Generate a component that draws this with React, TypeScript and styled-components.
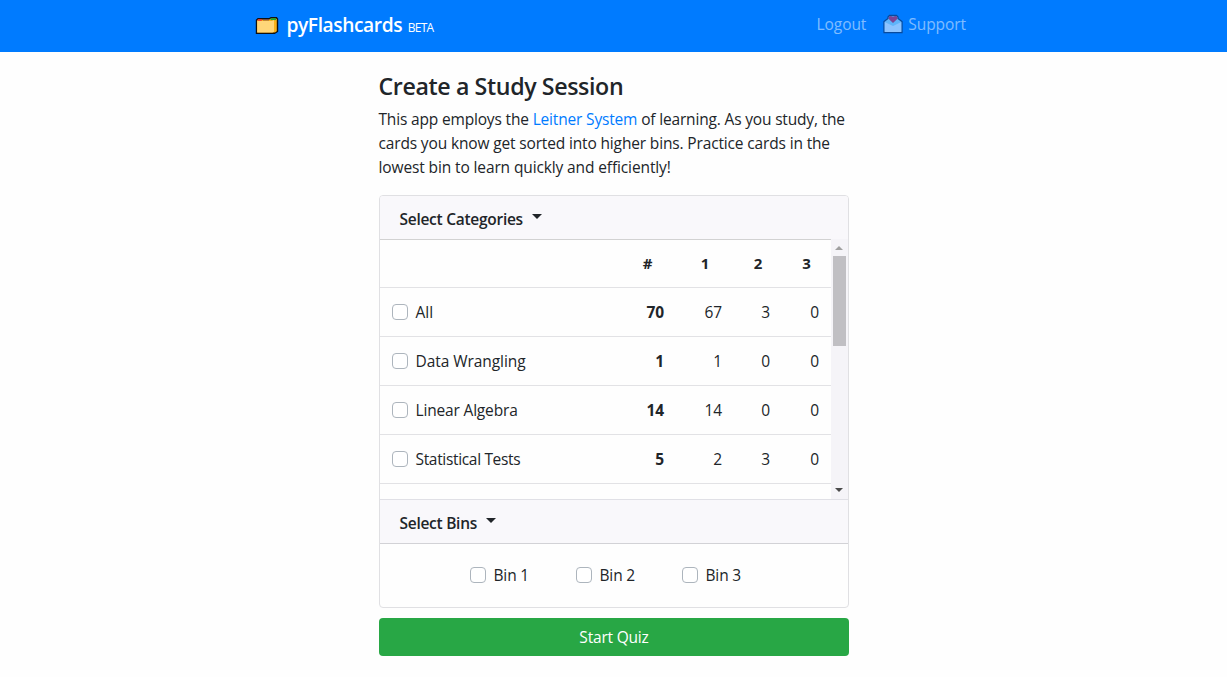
import React from 'react';
import styled, { createGlobalStyle } from 'styled-components';

const GlobalStyle = createGlobalStyle`
  * { box-sizing: border-box; }
  body {
    margin: 0;
    background: #fefefe;
    color: #212529;
    font: 400 15.5px/24px "Open Sans", "Noto Sans", sans-serif;
  }
`;

const Navbar = styled.nav`
  height: 52px;
  padding: 0 261px 0 255px;
  display: flex;
  align-items: center;
  justify-content: space-between;
  background: #007bff;
`;

const Brand = styled.a`
  display: flex;
  align-items: baseline;
  color: #fff;
  white-space: nowrap;
`;

const BrandName = styled.span`
  margin: -1px 0 1px 7.5px;
  font-size: 19.2px;
  font-weight: 600;
  letter-spacing: -0.42px;
  line-height: 30px;
`;

const Beta = styled.span`
  margin-left: 5.5px;
  font-size: 12px;
  letter-spacing: -0.7px;
`;

const NavLinks = styled.div`
  display: flex;
  align-items: center;
  padding-bottom: 4px;
  color: rgba(255, 255, 255, 0.5);
`;

const NavLink = styled.a`
  display: flex;
  align-items: center;
  white-space: nowrap;
  letter-spacing: -0.07px;
`;

const NavSupport = styled(NavLink)`
  margin-left: 17px;
  gap: 5px;
`;

const Main = styled.main`
  width: 470px;
  margin: 0 auto 0 379px;
  padding-top: 20px;
`;

const Title = styled.h1`
  margin: 0 0 0 -0.5px;
  font-size: 23.2px;
  font-weight: 600;
  line-height: 29px;
  letter-spacing: -0.38px;
  white-space: nowrap;
`;

const Intro = styled.p`
  margin: 6px 0 16px -0.5px;
`;

const Line = styled.span<{ $spacing: number }>`
  display: block;
  white-space: nowrap;
  letter-spacing: ${p => p.$spacing}px;
`;

const Link = styled.a`
  color: #007bff;
`;

const Card = styled.section`
  border: 1px solid #e0e0e3;
  border-radius: 4px;
  overflow: hidden;
`;

const SectionHeader = styled.div<{ $ruled?: boolean }>`
  height: ${p => (p.$ruled ? 45 : 43)}px;
  padding: 2px 19.5px 0;
  display: flex;
  align-items: center;
  background: #f9f8fb;
  font-weight: 600;
  letter-spacing: -0.27px;
  border-style: solid;
  border-color: #e0e0e6 transparent #d2d2d6;
  border-width: ${p => (p.$ruled ? '1px 0' : '0')};
`;

const Caret = styled.span`
  margin: 0 0 4px 9px;
  border: 5px solid transparent;
  border-top-color: #212529;
  border-bottom: 0;
`;

const ScrollArea = styled.div`
  height: 260px;
  display: flex;
  overflow: hidden;
`;

const Table = styled.div`
  flex: 1;
  border-top: 1px solid #d2d2d2;
`;

const Row = styled.div<{ $head?: boolean }>`
  height: ${p => (p.$head ? 48 : 49)}px;
  display: grid;
  grid-template-columns: 1fr 57px 58px 48px 49px;
  align-items: center;
  border-bottom: 1px solid #e2e2e5;
`;

const HeadCell = styled.span`
  padding-bottom: 2px;
  text-align: center;
  font-weight: 700;
  font-size: 15px;
`;

const NumberCell = styled.span<{ $bold?: boolean }>`
  padding-right: 12px;
  text-align: right;
  letter-spacing: -0.1px;
  font-weight: ${p => (p.$bold ? 700 : 400)};
`;

const Option = styled.label<{ $spacing?: number }>`
  display: flex;
  align-items: center;
  gap: 7.5px;
  white-space: nowrap;
  letter-spacing: ${p => p.$spacing ?? -0.15}px;
`;

const CategoryOption = styled(Option)`
  padding-left: 12px;
`;

const Checkbox = styled.input.attrs({ type: 'checkbox' })`
  appearance: none;
  width: 16px;
  height: 16px;
  margin: 0;
  border: 1px solid #adb5bd;
  border-radius: 4px;
  background: #fff;
`;

const Scrollbar = styled.div`
  width: 17px;
  padding: 7px 3px 7px 2px;
  display: flex;
  flex-direction: column;
  align-items: center;
  background: #f5f4f8;
`;

const Arrow = styled.span<{ $down?: boolean }>`
  border: 4px solid transparent;
  ${p => (p.$down ? 'border-top-color: #4a4a4a; border-bottom: 0;' : 'border-bottom-color: #a0a0a0; border-top: 0;')}
`;

const Thumb = styled.div`
  width: 13px;
  height: 90px;
  margin: 6px -1px auto 0;
  background: #c0bfc3;
`;

const Bins = styled.div`
  height: 63px;
  padding: 0 0 1px 90px;
  display: grid;
  grid-template-columns: repeat(3, 106px);
  align-items: center;
`;

const StartButton = styled.button`
  width: 100%;
  height: 38px;
  margin-top: 10px;
  padding: 0;
  border: 0;
  border-radius: 4px;
  background: #28a745;
  color: #fff;
  font: inherit;
  letter-spacing: -0.2px;
`;

const FolderIcon = () => (
  <svg width="24" height="20" viewBox="0 0 24 20" style={{ alignSelf: 'center' }}>
    <path d="M1.500 4 3 2.800h11l2-1h5.500l1 1.200v12.500l-1.500 1-1.500.8H1.500z" fill="#f9b21a" stroke="#111" strokeWidth="1.400" />
    <path d="M2.800 4h4" stroke="#f0303a" strokeWidth="1.600" />
    <path d="M8 3.800h6" stroke="#704a58" strokeWidth="1.200" />
    <path d="M15.500 3.200h5.500" stroke="#16a637" strokeWidth="1.800" />
    <path d="M2.200 5H17l2-1v11.800l-1.500.8H2.200z" fill="#ffd679" />
  </svg>
);

const LetterIcon = () => (
  <svg width="20" height="20" viewBox="0 0 20 20">
    <path d="M1 7.500 5 4.500V3L6.500 1.500h7L15 3v1.500l4 3V18.500H1z" fill="#5fb4fa" stroke="#084a9c" strokeWidth="1.300" />
    <path d="M10 9 5.800 5Q5 2 8 2l2 1 2-1q3 0 2.200 3z" fill="#7b4496" />
    <path d="M1.700 8 10 12l8.300-4v9.900H1.700z" fill="#8cc3ff" />
  </svg>
);

const categories = [
  { name: 'All', counts: [70, 67, 3, 0], spacing: 0 },
  { name: 'Data Wrangling', counts: [1, 1, 0, 0], spacing: -0.06 },
  { name: 'Linear Algebra', counts: [14, 14, 0, 0], spacing: -0.17 },
  { name: 'Statistical Tests', counts: [5, 2, 3, 0], spacing: -0.33 },
];

export default function App() {
  return (
    <>
      <GlobalStyle />
      <Navbar>
        <Brand>
          <FolderIcon />
          <BrandName>pyFlashcards</BrandName>
          <Beta>BETA</Beta>
        </Brand>
        <NavLinks>
          <NavLink>Logout</NavLink>
          <NavSupport><LetterIcon />Support</NavSupport>
        </NavLinks>
      </Navbar>
      <Main>
        <Title>Create a Study Session</Title>
        <Intro>
          <Line $spacing={-0.17}>This app employs the <Link>Leitner System</Link> of learning. As you study, the</Line>
          <Line $spacing={-0.15}>cards you know get sorted into higher bins. Practice cards in the</Line>
          <Line $spacing={-0.12}>lowest bin to learn quickly and efficiently!</Line>
        </Intro>
        <Card>
          <SectionHeader>Select Categories<Caret /></SectionHeader>
          <ScrollArea>
            <Table>
              <Row $head>
                <span />
                {['#', '1', '2', '3'].map(h => <HeadCell key={h}>{h}</HeadCell>)}
              </Row>
              {categories.map(c => (
                <Row key={c.name}>
                  <CategoryOption $spacing={c.spacing}><Checkbox />{c.name}</CategoryOption>
                  {c.counts.map((n, i) => <NumberCell key={i} $bold={i === 0}>{n}</NumberCell>)}
                </Row>
              ))}
            </Table>
            <Scrollbar>
              <Arrow />
              <Thumb />
              <Arrow $down />
            </Scrollbar>
          </ScrollArea>
          <SectionHeader $ruled>Select Bins<Caret /></SectionHeader>
          <Bins>
            {[1, 2, 3].map(n => <Option key={n}><Checkbox /><span>Bin {n}</span></Option>)}
          </Bins>
        </Card>
        <StartButton>Start Quiz</StartButton>
      </Main>
    </>
  );
}
